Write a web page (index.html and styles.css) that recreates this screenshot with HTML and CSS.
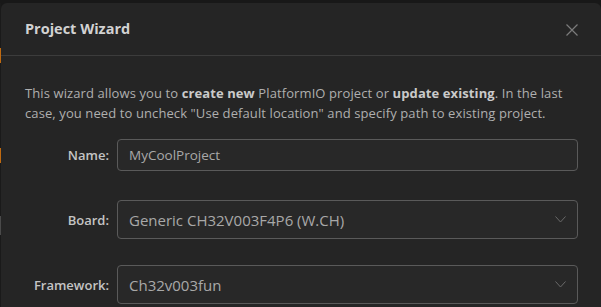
FILE: index.html
```html
<!DOCTYPE html>
<html>
<head>
<meta charset="utf-8">
<link rel="stylesheet" href="styles.css">
</head>
<body>
<div class="page">
  <div class="edge">
    <span class="mark m1"></span>
    <span class="mark m2"></span>
    <span class="mark m3"></span>
  </div>
  <div class="dialog">
    <div class="header">
      <div class="title">Project Wizard</div>
      <svg class="close" width="12" height="12" viewBox="0 0 12 12"><path d="M0.5 0.5 L11.5 11.5 M11.5 0.5 L0.5 11.5" stroke="#7b7b7b" stroke-width="1.2" fill="none"/></svg>
    </div>
    <div class="body">
      <p class="intro">This wizard allows you to <b>create new</b> PlatformIO project or <b>update existing</b>. In the last case, you need to uncheck "Use default location" and specify path to existing project.</p>
      <div class="form">
        <label class="lbl row-name">Name:</label>
        <div class="field input row-name">MyCoolProject</div>
        <label class="lbl row-board">Board:</label>
        <div class="field select row-board"><span>Generic CH32V003F4P6 (W.CH)</span><svg class="chev" width="11" height="7" viewBox="0 0 11 7"><path d="M0.5 0.5 L5.5 6 L10.5 0.5" stroke="#6a6a6a" stroke-width="1" fill="none"/></svg></div>
        <label class="lbl row-fw">Framework:</label>
        <div class="field select row-fw"><span>Ch32v003fun</span><svg class="chev" width="11" height="7" viewBox="0 0 11 7"><path d="M0.5 0.5 L5.5 6 L10.5 0.5" stroke="#6a6a6a" stroke-width="1" fill="none"/></svg></div>
      </div>
    </div>
  </div>
</div>
</body>
</html>
```

FILE: styles.css
```css
html, body {
  margin: 0;
  padding: 0;
  background: #181818;
  height: 100%;
  overflow: hidden;
}
.page {
  display: flex;
  padding-top: 3px;
  height: 304px;
  font-family: "Open Sans", "Noto Sans", sans-serif;
}
.edge {
  width: 1px;
  display: flex;
  flex-direction: column;
  background: #1a1a1a;
}
.mark {
  display: block;
  width: 1px;
}
.m1 { margin-top: 45px; height: 15px; background: #c06a10; }
.m2 { margin-top: 85px; height: 15px; background: #c06a10; }
.m3 { margin-top: 53px; height: 19px; background: #4a4a4a; }
.dialog {
  flex: 1;
  background: #252525;
  border-top-left-radius: 6px;
  border-top-right-radius: 6px;
}
.header {
  height: 52px;
  border-bottom: 1px solid #3c3c3c;
  display: flex;
  align-items: center;
  justify-content: space-between;
  padding: 0 23px 0 24px;
}
.title {
  color: #d2d2d2;
  font-weight: 700;
  font-size: 14.5px;
  margin-top: -1px;
}
.close {
  margin-top: 1px;
}
.body {
  padding: 0 23px 0 24px;
}
.intro {
  margin: 27px 0 0 0;
  max-width: 548px;
  font-size: 13px;
  line-height: 20px;
  color: #afafaf;
  letter-spacing: 0.1px;
}
.intro b {
  color: #cacaca;
  font-weight: 700;
}
.form {
  display: grid;
  grid-template-columns: 84px 1fr;
  column-gap: 8px;
  margin-top: 16px;
}
.lbl {
  color: #c4c4c4;
  font-weight: 600;
  font-size: 13px;
  text-align: right;
  align-self: center;
}
.field {
  box-sizing: border-box;
  border: 1px solid #5a5a5a;
  border-radius: 4px;
  background: #282828;
  color: #a8a8a8;
  display: flex;
  align-items: center;
  padding-left: 11px;
}
.input {
  height: 32px;
  font-size: 13.5px;
}
.select {
  height: 39px;
  font-size: 15px;
  justify-content: space-between;
  padding-right: 11px;
}
.row-board { margin-top: 29px; }
.row-fw { margin-top: 26px; }
.chev { flex: none; }
```
